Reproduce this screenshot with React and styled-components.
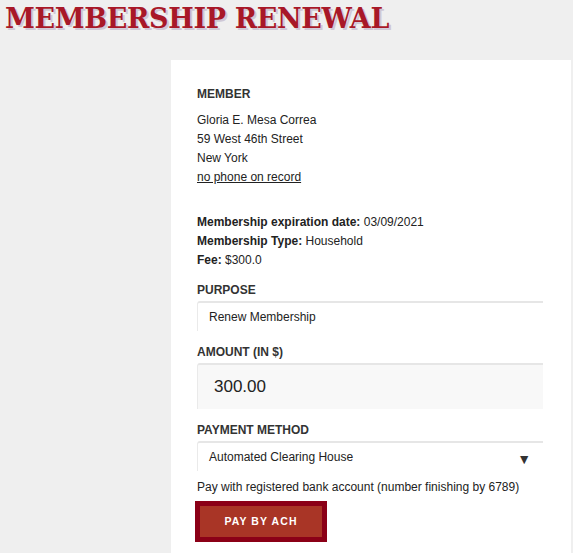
import React from "react";
import styled, { createGlobalStyle } from "styled-components";

const Global = createGlobalStyle`
  html, body { margin: 0; padding: 0; background: #efefef; }
  body { font-family: "Liberation Sans", Arial, sans-serif; color: #222; }
`;

const Page = styled.div`
  min-height: 100vh;
  background: #efefef;
  overflow: hidden;
`;

const Title = styled.h1`
  margin: 0;
  padding: 3px 0 0 5px;
  height: 57px;
  box-sizing: border-box;
  font-family: "DejaVu Serif", serif;
  font-weight: bold;
  font-size: 27px;
  line-height: 32px;
  letter-spacing: -0.35px;
  color: #a81828;
  text-shadow: 2px 2px 0 #cfc8d6;
  white-space: nowrap;
`;

const Layout = styled.div`
  display: grid;
  grid-template-columns: 171px 400px;
  padding-top: 3px;
`;

const Card = styled.section`
  grid-column: 2;
  background: #fff;
  padding: 27px 28px 40px 26px;
  min-height: 520px;
  box-sizing: border-box;
`;

const Label = styled.div`
  font-size: 12px;
  line-height: 14px;
  font-weight: bold;
  color: #333;
  text-transform: uppercase;
  margin-top: ${(p) => p.$top || 0}px;
`;

const Lines = styled.div`
  font-size: 12px;
  line-height: 19px;
  color: #222;
  margin-top: ${(p) => p.$top || 0}px;
`;

const Line = styled.div``;

const PhoneLink = styled.a`
  color: #222;
  text-decoration: underline;
`;

const Strong = styled.b`
  font-weight: bold;
`;

const Field = styled.div`
  margin-top: 4px;
  height: ${(p) => p.$h}px;
  box-sizing: border-box;
  display: flex;
  align-items: center;
  justify-content: space-between;
  padding: 0 ${(p) => p.$pr || 0}px 0 ${(p) => p.$pl}px;
  background: ${(p) => p.$bg || "#fff"};
  border-top: 2px solid #e6e6e6;
  border-left: 1px solid #eaeaea;
  border-top-left-radius: 3px;
  font-size: ${(p) => p.$fs || 12}px;
  color: #222;
`;

const Arrow = styled.span`
  font-size: 14px;
  color: #333;
  margin-top: 3px;
`;

const Note = styled.div`
  margin-top: 7px;
  font-size: 12px;
  line-height: 19px;
  color: #222;
`;

const PayButton = styled.button`
  margin: 4px 0 0 -2px;
  display: block;
  width: 132px;
  height: 41px;
  box-sizing: border-box;
  background: #a93526;
  border: 5px solid #8b0017;
  color: #fff;
  font-family: "Liberation Sans", Arial, sans-serif;
  font-weight: bold;
  font-size: 10.5px;
  letter-spacing: 1.1px;
  padding: 0 0 1px 0;
  cursor: pointer;
`;

export default function App() {
  return (
    <Page>
      <Global />
      <Title>MEMBERSHIP RENEWAL</Title>
      <Layout>
        <Card>
          <Label>Member</Label>
          <Lines $top={10}>
            <Line>Gloria E. Mesa Correa</Line>
            <Line>59 West 46th Street</Line>
            <Line>New York</Line>
            <Line>
              <PhoneLink href="#">no phone on record</PhoneLink>
            </Line>
          </Lines>
          <Lines $top={26}>
            <Line>
              <Strong>Membership expiration date:</Strong> 03/09/2021
            </Line>
            <Line>
              <Strong>Membership Type:</Strong> Household
            </Line>
            <Line>
              <Strong>Fee:</Strong> $300.0
            </Line>
          </Lines>
          <Label $top={13}>Purpose</Label>
          <Field $h={30} $pl={11}>Renew Membership</Field>
          <Label $top={14}>Amount (in $)</Label>
          <Field $h={46} $pl={16} $bg="#f8f8f8" $fs={17}>300.00</Field>
          <Label $top={14}>Payment method</Label>
          <Field $h={30} $pl={11} $pr={12}>
            <span>Automated Clearing House</span>
            <Arrow>▼</Arrow>
          </Field>
          <Note>Pay with registered bank account (number finishing by 6789)</Note>
          <PayButton>PAY BY ACH</PayButton>
        </Card>
      </Layout>
    </Page>
  );
}
